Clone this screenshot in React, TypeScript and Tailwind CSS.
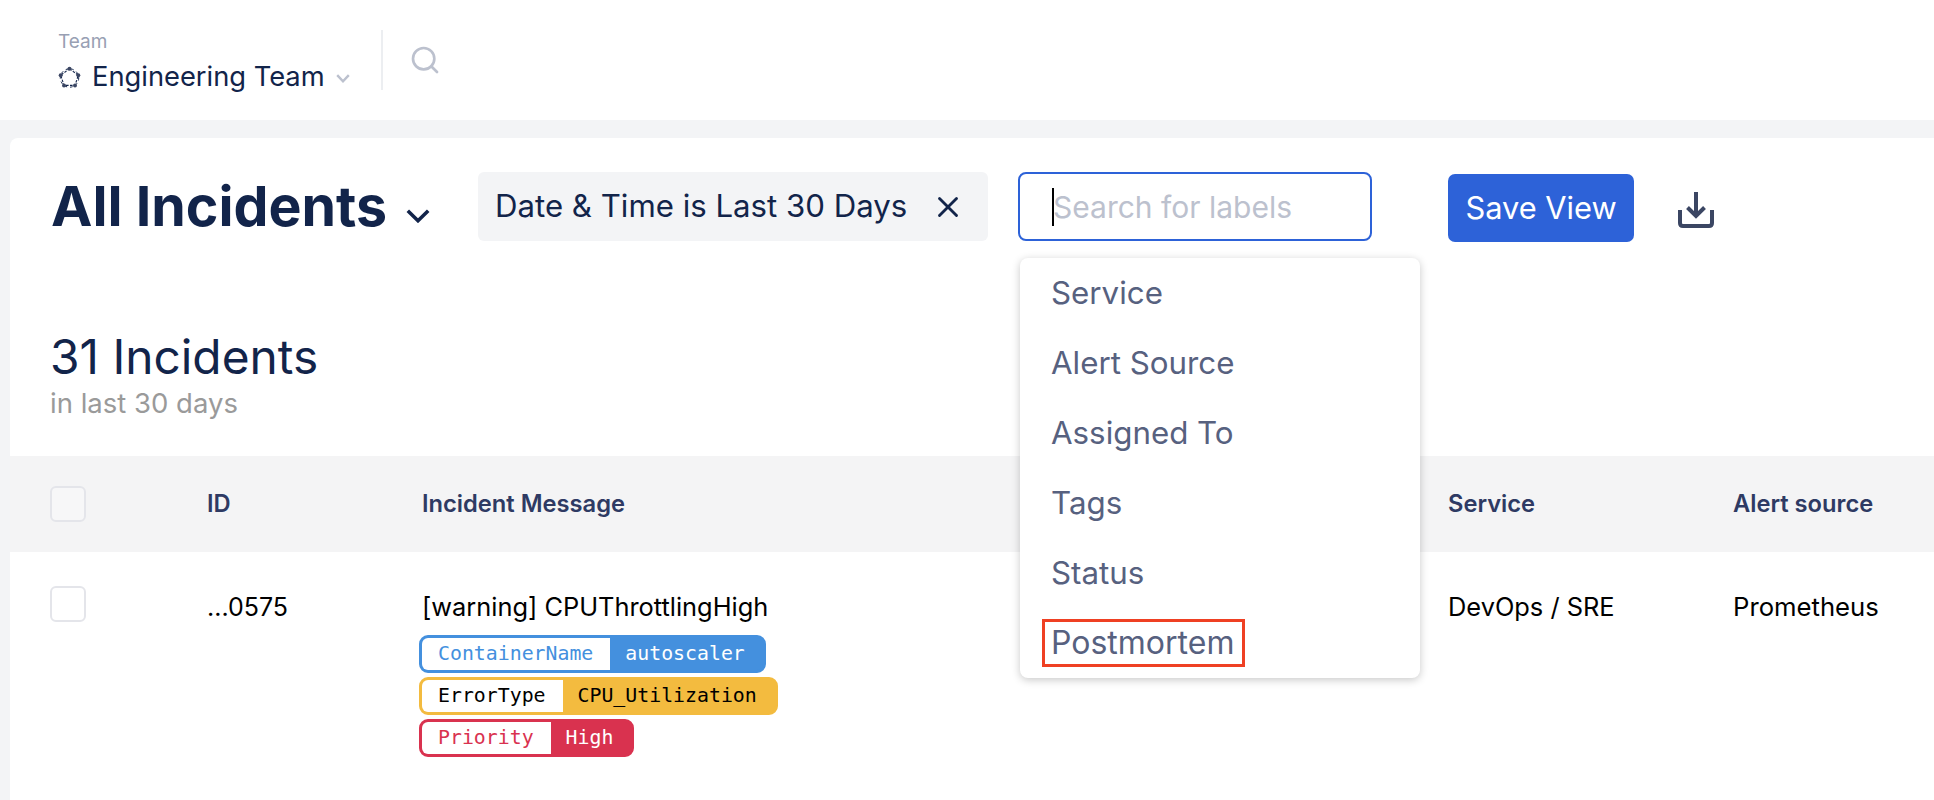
import React from 'react';
import { Search, X } from 'lucide-react';

const inter = "font-['Inter',sans-serif]";
const options = ['Service', 'Alert Source', 'Assigned To', 'Tags', 'Status', 'Postmortem'];

const Chevron = ({ w, h, sw, className }: { w: number; h: number; sw: number; className?: string }) => (
  <svg width={w} height={h} viewBox={`0 0 ${w} ${h}`} fill="none" className={className}>
    <path d={`M${sw / 2} ${sw / 2} L${w / 2} ${h - sw / 2 - 0.5} L${w - sw / 2} ${sw / 2}`} stroke="currentColor" strokeWidth={sw} />
  </svg>
);

const TeamIcon = () => (
  <svg width="23" height="23" viewBox="0 0 23 23" fill="none" className="shrink-0">
    <path d="M11.5 2.8 20.3 9.2 17 19.4H6L2.7 9.2Z" stroke="#12244a" strokeWidth="1.1" strokeDasharray="2.6 1.4" />
    <circle cx="11.5" cy="12" r="9.2" stroke="#12244a" strokeWidth="1" strokeDasharray="2.6 3" />
    <circle cx="11.5" cy="2.8" r="2" fill="#3b4663" />
    <circle cx="20.3" cy="9.2" r="2" fill="#3b4663" />
    <circle cx="17" cy="19.4" r="2" fill="#3b4663" />
    <circle cx="6" cy="19.4" r="2" fill="#3b4663" />
    <circle cx="2.7" cy="9.2" r="2" fill="#3b4663" />
  </svg>
);

const DownloadIcon = ({ className }: { className?: string }) => (
  <svg width="40" height="40" viewBox="0 0 40 40" fill="none" stroke="#3b4663" strokeWidth="4" className={className}>
    <path d="M4 20V33Q4 36 7 36H33Q36 36 36 33V20" />
    <path d="M20 2V26" />
    <path d="M11.5 17.5 20 26 28.5 17.5" />
  </svg>
);

const Tag = ({ name, value, border, nameText, valueText }: { name: string; value: string; border: string; nameText: string; valueText: string }) => (
  <div className={`flex h-[38px] w-fit items-stretch overflow-hidden rounded-[9px] border-[3px] font-['DejaVu_Sans_Mono',monospace] text-[19.85px] leading-none ${border}`}>
    <span className={`flex items-center bg-white pl-4 pr-[17px] ${nameText}`}>{name}</span>
    <span className={`flex items-center pl-[15px] pr-[18px] ${valueText}`}>{value}</span>
  </div>
);

export default function App() {
  return (
    <div className={`h-[800px] w-[1934px] overflow-hidden bg-[#f3f4f6] ${inter}`}>
      <header className="flex h-[120px] items-center bg-white pl-[58px]">
        <div className="flex flex-col pt-[6px]">
          <span className="text-[19px] leading-[22px] text-[#98a0b3]">Team</span>
          <div className="mt-[6px] flex items-center">
            <TeamIcon />
            <span className="ml-[11px] text-[27.3px] leading-[36px] text-[#12244a]">Engineering Team</span>
            <Chevron w={14} h={9} sw={2.4} className="ml-[11px] mt-[2px] text-[#bcc1ce]" />
          </div>
        </div>
        <div className="ml-[31px] h-[60px] w-[2px] bg-[#eceef1]" />
        <Search size={32} strokeWidth={2} className="ml-[26px] text-[#bcc1ce]" />
      </header>
      <main className="mt-[18px] ml-[10px] h-[662px] rounded-tl-[8px] bg-white">
        <div className="relative flex h-[318px] flex-col">
          <div className="flex h-[103px] items-start pl-[41px] pt-[34px]">
            <h1 className="w-[336px] whitespace-nowrap text-[55.5px] font-bold leading-[68px] text-[#12244a]">All Incidents</h1>
            <Chevron w={24} h={14} sw={3.6} className="ml-[19px] mt-[37px] text-[#12244a]" />
            <div className="ml-[48px] flex h-[69px] w-[510px] items-center rounded-[6px] bg-[#f3f4f6] pl-[17px] text-[31.2px] text-[#12244a]">
              <span className="whitespace-nowrap">Date &amp; Time is Last 30 Days</span>
              <X size={34} strokeWidth={2} className="ml-[24px] shrink-0" />
            </div>
            <div className="ml-[30px] flex h-[69px] w-[354px] items-center rounded-[8px] border-2 border-[#2d62d8] pl-[32px] text-[30px] text-[#bcc1ce]">
              <span className="h-[38px] w-[2px] shrink-0 bg-black" />
              <span className="-ml-[1px] whitespace-nowrap leading-[38px]">Search for labels</span>
            </div>
            <button className="ml-[76px] mt-[2px] flex h-[68px] w-[186px] items-center justify-center rounded-[7px] bg-[#2d62d8] text-[30.8px] text-white">Save View</button>
            <DownloadIcon className="ml-[42px] mt-[18px]" />
          </div>
          <div className="pl-[40px] pt-[89px]">
            <div className="text-[47.8px] leading-[54px] text-[#12244a]">31 Incidents</div>
            <div className="mt-[3px] text-[27.5px] leading-[32px] text-[#9a9a9a]">in last 30 days</div>
          </div>
          <ul className="absolute left-[1010px] top-[120px] flex h-[420px] w-[400px] flex-col rounded-[8px] bg-white shadow-[0_2px_8px_rgba(0,0,0,0.22)]">
            {options.map((o) => (
              <li key={o} className="flex h-[70px] items-center pl-[31px] text-[31.3px] text-[#57617f]">
                {o === 'Postmortem' ? (
                  <span className="-ml-[9px] w-[203px] whitespace-nowrap border-[3px] border-[#ef4023] px-[6px] py-[1px] text-[32px] leading-[40px]">{o}</span>
                ) : (
                  o
                )}
              </li>
            ))}
          </ul>
        </div>
        <div className="grid h-[96px] grid-cols-[197px_215px_1026px_285px_1fr] items-center bg-[#f4f4f5] text-[23.7px] font-semibold text-[#2e3a63]">
          <div className="pl-[40px]">
            <div className="h-[36px] w-[36px] rounded-[6px] border-2 border-[#e4e5ea] bg-[#f7f7f8]" />
          </div>
          <div>ID</div>
          <div>Incident Message</div>
          <div>Service</div>
          <div>Alert source</div>
        </div>
        <div className="grid grid-cols-[197px_215px_1026px_285px_1fr] pt-[34px] text-[25.4px] leading-[32px] text-black">
          <div className="pl-[40px]">
            <div className="h-[36px] w-[36px] rounded-[6px] border-2 border-[#e4e5ea] bg-white" />
          </div>
          <div className="pt-[5px] text-[25px]">...0575</div>
          <div className="pt-[5px]">
            <div>[warning] CPUThrottlingHigh</div>
            <div className="-ml-[3px] mt-[12px] flex flex-col gap-[4px]">
              <Tag name="ContainerName" value="autoscaler" border="border-[#4490de] bg-[#4490de]" nameText="text-[#4490de]" valueText="text-white" />
              <Tag name="ErrorType" value="CPU_Utilization" border="border-[#f3bb3f] bg-[#f3bb3f]" nameText="text-black" valueText="text-black" />
              <Tag name="Priority" value="High" border="border-[#d9324f] bg-[#d9324f]" nameText="text-[#d9324f]" valueText="text-white" />
            </div>
          </div>
          <div className="pt-[5px]">DevOps / SRE</div>
          <div className="pt-[5px] text-[25.7px]">Prometheus</div>
        </div>
      </main>
    </div>
  );
}
